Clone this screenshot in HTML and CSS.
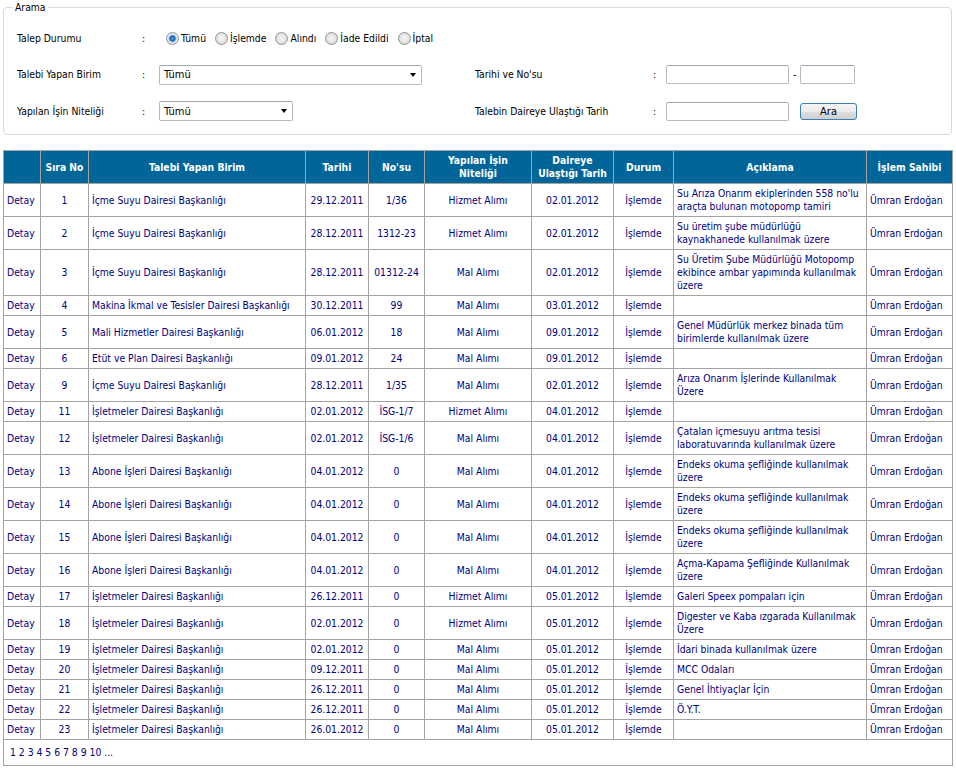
FILE: index.html
```html
<!DOCTYPE html>
<html lang="tr">
<head>
<meta charset="utf-8">
<title>Arama</title>
<link rel="stylesheet" href="styles.css">
</head>
<body>
<div class="page">
  <fieldset class="search">
    <legend>Arama</legend>
    <div class="form">
      <div class="lbl">Talep Durumu</div>
      <div class="colon">:</div>
      <div class="radios">
        <span class="radio"><span class="dot on"></span>Tümü</span>
        <span class="radio"><span class="dot"></span>İşlemde</span>
        <span class="radio"><span class="dot"></span>Alındı</span>
        <span class="radio"><span class="dot"></span>İade Edildi</span>
        <span class="radio"><span class="dot"></span>İptal</span>
      </div>

      <div class="lbl">Talebi Yapan Birim</div>
      <div class="colon">:</div>
      <div class="ctl"><div class="select wide">Tümü<span class="arrow"></span></div></div>
      <div class="lbl">Tarihi ve No'su</div>
      <div class="colon">:</div>
      <div class="ctl"><span class="input date"></span><span class="dash">-</span><span class="input no"></span></div>

      <div class="lbl">Yapılan İşin Niteliği</div>
      <div class="colon">:</div>
      <div class="ctl"><div class="select narrow">Tümü<span class="arrow"></span></div></div>
      <div class="lbl">Talebin Daireye Ulaştığı Tarih</div>
      <div class="colon">:</div>
      <div class="ctl"><span class="input date"></span><button class="btn" type="button">Ara</button></div>
    </div>
  </fieldset>

  <table class="grid">
    <colgroup>
      <col class="w37"><col class="w48"><col class="w217"><col class="w63"><col class="w56">
      <col class="w107"><col class="w82"><col class="w60"><col class="w193"><col class="w86">
    </colgroup>
    <thead>
      <tr>
        <th></th><th>Sıra No</th><th>Talebi Yapan Birim</th><th>Tarihi</th><th>No'su</th>
        <th>Yapılan İşin<br>Niteliği</th><th>Daireye<br>Ulaştığı Tarih</th><th>Durum</th><th>Açıklama</th><th>İşlem Sahibi</th>
      </tr>
    </thead>
    <tbody>
      <tr><td class="det">Detay</td><td class="c">1</td><td class="l">İçme Suyu Dairesi Başkanlığı</td><td class="c">29.12.2011</td><td class="c">1/36</td><td class="c">Hizmet Alımı</td><td class="c">02.01.2012</td><td class="c">İşlemde</td><td class="l">Su Arıza Onarım ekiplerinden 558 no'lu<br>araçta bulunan motopomp tamiri</td><td class="l">Ümran Erdoğan</td></tr>
      <tr><td class="det">Detay</td><td class="c">2</td><td class="l">İçme Suyu Dairesi Başkanlığı</td><td class="c">28.12.2011</td><td class="c">1312-23</td><td class="c">Hizmet Alımı</td><td class="c">02.01.2012</td><td class="c">İşlemde</td><td class="l">Su üretim şube müdürlüğü<br>kaynakhanede kullanılmak üzere</td><td class="l">Ümran Erdoğan</td></tr>
      <tr><td class="det">Detay</td><td class="c">3</td><td class="l">İçme Suyu Dairesi Başkanlığı</td><td class="c">28.12.2011</td><td class="c">01312-24</td><td class="c">Mal Alımı</td><td class="c">02.01.2012</td><td class="c">İşlemde</td><td class="l">Su Üretim Şube Müdürlüğü Motopomp<br>ekibince ambar yapımında kullanılmak<br>üzere</td><td class="l">Ümran Erdoğan</td></tr>
      <tr><td class="det">Detay</td><td class="c">4</td><td class="l">Makina İkmal ve Tesisler Dairesi Başkanlığı</td><td class="c">30.12.2011</td><td class="c">99</td><td class="c">Mal Alımı</td><td class="c">03.01.2012</td><td class="c">İşlemde</td><td class="l"></td><td class="l">Ümran Erdoğan</td></tr>
      <tr><td class="det">Detay</td><td class="c">5</td><td class="l">Mali Hizmetler Dairesi Başkanlığı</td><td class="c">06.01.2012</td><td class="c">18</td><td class="c">Mal Alımı</td><td class="c">09.01.2012</td><td class="c">İşlemde</td><td class="l">Genel Müdürlük merkez binada tüm<br>birimlerde kullanılmak üzere</td><td class="l">Ümran Erdoğan</td></tr>
      <tr><td class="det">Detay</td><td class="c">6</td><td class="l">Etüt ve Plan Dairesi Başkanlığı</td><td class="c">09.01.2012</td><td class="c">24</td><td class="c">Mal Alımı</td><td class="c">09.01.2012</td><td class="c">İşlemde</td><td class="l"></td><td class="l">Ümran Erdoğan</td></tr>
      <tr><td class="det">Detay</td><td class="c">9</td><td class="l">İçme Suyu Dairesi Başkanlığı</td><td class="c">28.12.2011</td><td class="c">1/35</td><td class="c">Mal Alımı</td><td class="c">02.01.2012</td><td class="c">İşlemde</td><td class="l">Arıza Onarım İşlerinde Kullanılmak<br>Üzere</td><td class="l">Ümran Erdoğan</td></tr>
      <tr><td class="det">Detay</td><td class="c">11</td><td class="l">İşletmeler Dairesi Başkanlığı</td><td class="c">02.01.2012</td><td class="c">İSG-1/7</td><td class="c">Hizmet Alımı</td><td class="c">04.01.2012</td><td class="c">İşlemde</td><td class="l"></td><td class="l">Ümran Erdoğan</td></tr>
      <tr><td class="det">Detay</td><td class="c">12</td><td class="l">İşletmeler Dairesi Başkanlığı</td><td class="c">02.01.2012</td><td class="c">İSG-1/6</td><td class="c">Mal Alımı</td><td class="c">04.01.2012</td><td class="c">İşlemde</td><td class="l">Çatalan içmesuyu arıtma tesisi<br>laboratuvarında kullanılmak üzere</td><td class="l">Ümran Erdoğan</td></tr>
      <tr><td class="det">Detay</td><td class="c">13</td><td class="l">Abone İşleri Dairesi Başkanlığı</td><td class="c">04.01.2012</td><td class="c">0</td><td class="c">Mal Alımı</td><td class="c">04.01.2012</td><td class="c">İşlemde</td><td class="l">Endeks okuma şefliğinde kullanılmak<br>üzere</td><td class="l">Ümran Erdoğan</td></tr>
      <tr><td class="det">Detay</td><td class="c">14</td><td class="l">Abone İşleri Dairesi Başkanlığı</td><td class="c">04.01.2012</td><td class="c">0</td><td class="c">Mal Alımı</td><td class="c">04.01.2012</td><td class="c">İşlemde</td><td class="l">Endeks okuma şefliğinde kullanılmak<br>üzere</td><td class="l">Ümran Erdoğan</td></tr>
      <tr><td class="det">Detay</td><td class="c">15</td><td class="l">Abone İşleri Dairesi Başkanlığı</td><td class="c">04.01.2012</td><td class="c">0</td><td class="c">Mal Alımı</td><td class="c">04.01.2012</td><td class="c">İşlemde</td><td class="l">Endeks okuma şefliğinde kullanılmak<br>üzere</td><td class="l">Ümran Erdoğan</td></tr>
      <tr><td class="det">Detay</td><td class="c">16</td><td class="l">Abone İşleri Dairesi Başkanlığı</td><td class="c">04.01.2012</td><td class="c">0</td><td class="c">Mal Alımı</td><td class="c">04.01.2012</td><td class="c">İşlemde</td><td class="l">Açma-Kapama Şefliğinde Kullanılmak<br>üzere</td><td class="l">Ümran Erdoğan</td></tr>
      <tr><td class="det">Detay</td><td class="c">17</td><td class="l">İşletmeler Dairesi Başkanlığı</td><td class="c">26.12.2011</td><td class="c">0</td><td class="c">Hizmet Alımı</td><td class="c">05.01.2012</td><td class="c">İşlemde</td><td class="l">Galeri Speex pompaları için</td><td class="l">Ümran Erdoğan</td></tr>
      <tr><td class="det">Detay</td><td class="c">18</td><td class="l">İşletmeler Dairesi Başkanlığı</td><td class="c">02.01.2012</td><td class="c">0</td><td class="c">Hizmet Alımı</td><td class="c">05.01.2012</td><td class="c">İşlemde</td><td class="l">Digester ve Kaba ızgarada Kullanılmak<br>Üzere</td><td class="l">Ümran Erdoğan</td></tr>
      <tr><td class="det">Detay</td><td class="c">19</td><td class="l">İşletmeler Dairesi Başkanlığı</td><td class="c">02.01.2012</td><td class="c">0</td><td class="c">Mal Alımı</td><td class="c">05.01.2012</td><td class="c">İşlemde</td><td class="l">İdari binada kullanılmak üzere</td><td class="l">Ümran Erdoğan</td></tr>
      <tr><td class="det">Detay</td><td class="c">20</td><td class="l">İşletmeler Dairesi Başkanlığı</td><td class="c">09.12.2011</td><td class="c">0</td><td class="c">Mal Alımı</td><td class="c">05.01.2012</td><td class="c">İşlemde</td><td class="l">MCC Odaları</td><td class="l">Ümran Erdoğan</td></tr>
      <tr><td class="det">Detay</td><td class="c">21</td><td class="l">İşletmeler Dairesi Başkanlığı</td><td class="c">26.12.2011</td><td class="c">0</td><td class="c">Mal Alımı</td><td class="c">05.01.2012</td><td class="c">İşlemde</td><td class="l">Genel İhtiyaçlar İçin</td><td class="l">Ümran Erdoğan</td></tr>
      <tr><td class="det">Detay</td><td class="c">22</td><td class="l">İşletmeler Dairesi Başkanlığı</td><td class="c">26.12.2011</td><td class="c">0</td><td class="c">Mal Alımı</td><td class="c">05.01.2012</td><td class="c">İşlemde</td><td class="l">Ö.Y.T.</td><td class="l">Ümran Erdoğan</td></tr>
      <tr><td class="det">Detay</td><td class="c">23</td><td class="l">İşletmeler Dairesi Başkanlığı</td><td class="c">26.01.2012</td><td class="c">0</td><td class="c">Mal Alımı</td><td class="c">05.01.2012</td><td class="c">İşlemde</td><td class="l"></td><td class="l">Ümran Erdoğan</td></tr>
      <tr><td class="pager" colspan="10">1 2 3 4 5 6 7 8 9 10 ...</td></tr>
    </tbody>
  </table>
</div>
</body>
</html>
```
FILE: styles.css
```css
* { box-sizing: border-box; }
html, body { margin: 0; padding: 0; background: #fff; }
body {
  font-family: "DejaVu Sans Condensed", "DejaVu Sans", sans-serif;
  font-size: 10.3px;
  line-height: 13px;
  color: #000;
}
.page { padding: 0 4px 0 3px; }

.search {
  margin: 0;
  border: 1px solid #d5dbe1;
  border-radius: 4px;
  padding: 14px 0 13px 13px;
  min-width: 0;
}
.search legend {
  padding: 0 2px;
  margin-left: -4px;
  line-height: 14px;
  color: #000;
}

.form {
  display: grid;
  grid-template-columns: 125px 17px 316px 178px 13px 1fr;
  grid-auto-rows: 20px;
  row-gap: 16.5px;
  align-items: center;
}
.colon { padding-left: 0; }
.radios {
  grid-column: 3 / 7;
  display: flex;
  align-items: center;
  padding-left: 7px;
}
.radio {
  display: inline-flex;
  align-items: center;
  margin-right: 9px;
}
.dot {
  width: 13px;
  height: 13px;
  border-radius: 50%;
  border: 1px solid #939393;
  background: radial-gradient(circle at 50% 45%, #f7f7f7 0, #e2e2e2 55%, #cdcdcd 100%);
  margin-right: 2px;
  flex: none;
}
.dot.on {
  background: radial-gradient(circle at 50% 50%, #4aa3e8 0, #1c5fb0 2.6px, #a9cbef 3.6px, #eeeeee 4.6px, #d6d6d6 100%);
}

.ctl { display: flex; align-items: center; }
.select {
  position: relative;
  height: 20px;
  border: 1px solid #b6bbc3;
  border-top-color: #a1a7b0;
  border-radius: 2px;
  background: #fff;
  padding-left: 4px;
  display: flex;
  align-items: center;
  font-size: 11px;
  color: #000;
}
.select.wide { width: 263px; }
.select.narrow { width: 134px; }
.arrow {
  position: absolute;
  right: 5px;
  top: 7px;
  width: 0;
  height: 0;
  border-left: 3.5px solid transparent;
  border-right: 3.5px solid transparent;
  border-top: 4px solid #000;
}
.input {
  display: inline-block;
  height: 19px;
  border: 1px solid #b6bbc3;
  border-top-color: #a1a7b0;
  border-radius: 2px;
  background: #fff;
}
.input.date { width: 123px; }
.input.no { width: 55px; }
.dash { margin: 0 4px 0 4px; width: 3px; }
.btn {
  margin: 0 0 0 11px;
  width: 57px;
  height: 17px;
  padding: 0;
  border: 1px solid #3c7fb1;
  border-radius: 3px;
  background: linear-gradient(#f4f4f4 0, #ececec 50%, #dedede 51%, #cfcfcf 100%);
  font: inherit;
  font-size: 11px;
  line-height: 15px;
  color: #000;
}

.grid {
  margin-top: 15px;
  width: 949px;
  border-collapse: collapse;
  table-layout: fixed;
  color: #000080;
}
.w37 { width: 37px; }
.w48 { width: 48px; }
.w217 { width: 217px; }
.w63 { width: 63px; }
.w56 { width: 56px; }
.w107 { width: 107px; }
.w82 { width: 82px; }
.w60 { width: 60px; }
.w193 { width: 193px; }
.w86 { width: 86px; }
.grid th, .grid td {
  border: 1px solid #a3a3a3;
  padding: 3px 2px;
  line-height: 13px;
  vertical-align: middle;
  white-space: nowrap;
  overflow: hidden;
}
.grid th {
  background: #006699;
  color: #fff;
  font-weight: bold;
  text-align: center;
}
.grid td.c { text-align: center; }
.grid td.l { text-align: left; padding-left: 3px; }
.grid td.det { text-align: left; padding-left: 3px; }
.grid td.pager { padding: 6px 6px; text-align: left; }
```
